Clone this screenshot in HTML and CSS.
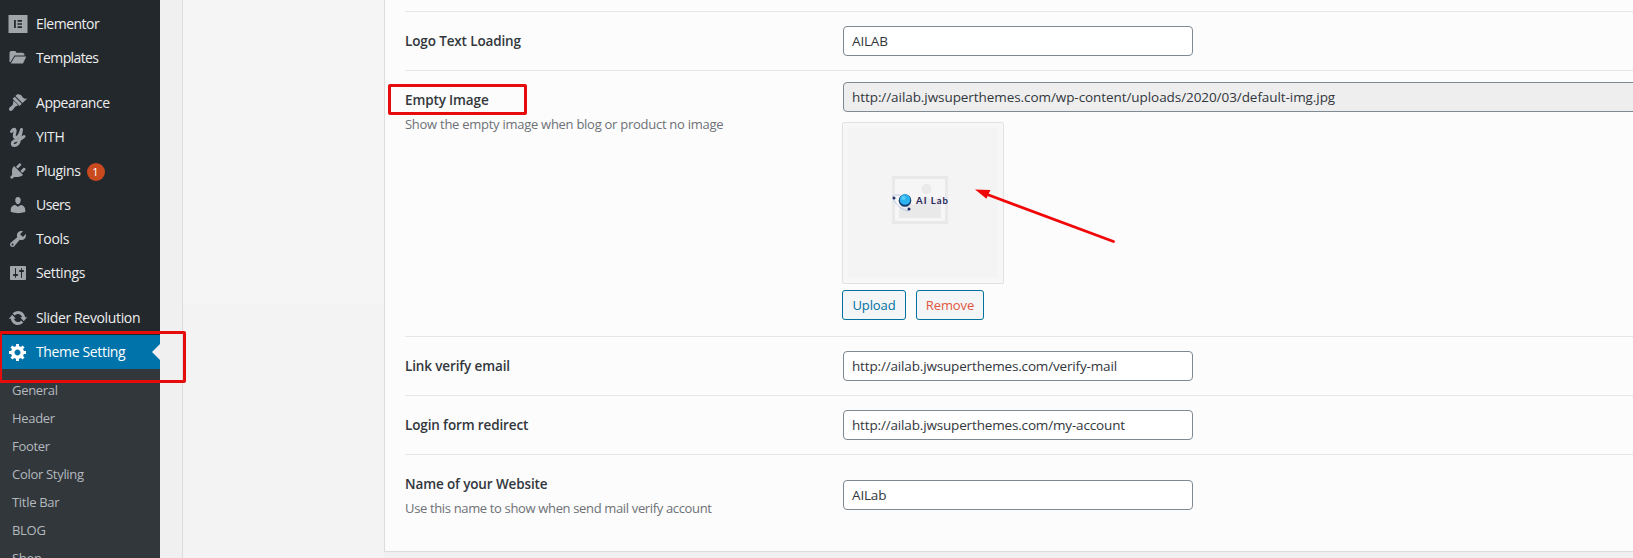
FILE: index.html
```html
<!DOCTYPE html>
<html lang="en">
<head>
<meta charset="utf-8">
<title>Theme Setting</title>
<link rel="stylesheet" href="styles.css">
</head>
<body>
<div class="app">
  <nav class="sidebar">
    <ul class="menu">
      <li class="item"><svg class="icon" viewBox="0 0 20 20"><path fill-rule="evenodd" d="M.5 1h19v18H.5zM6 6v8h1.800V6zM9.500 6v1.700H14V6zM9.500 9.200v1.600H14V9.200zM9.500 12.300V14H14v-1.700z"/></svg><span class="name t-elementor">Elementor</span></li>
      <li class="item"><svg class="icon" viewBox="0 0 20 20"><path d="M1.500 14V4.500L2.700 3h4.600L8.500 4.800H15L16.500 6.300v1.200H6.500L2.500 14z"/><path d="M2.700 15.500L7 8.500h11.300L15 15.500z"/></svg><span class="name t-templates">Templates</span></li>
      <li class="gap"></li>
      <li class="item"><svg class="icon" viewBox="0 0 20 20"><path d="M14.480 10.060L7.410 2.990l1.500-1.500c.5-.56 2.300-.47 3.510.32 1.210.8 1.430 1.280 2 2.100 1.180 1.680 3.060 1.850 5.020 1.700zM13.770 10.770l-2.120 2.120-7.070-7.070 2.120-2.120z"/><path d="M5.500 7.500l5 5c-2 .3-3 .7-4 2-1 1.400-1.700 2.800-3 3.300-1.500.5-3-.9-2.400-2.400.4-1.300 1.600-2 3-3 1.300-1 .9-2.800 1.400-4.900z"/></svg><span class="name t-appearance">Appearance</span></li>
      <li class="item"><svg class="icon" viewBox="0 0 20 20"><path class="stroke" d="M3.500 4.500C5.500 1.300 7.700 1.800 7 5 6 8.500 5.800 11 8.200 10.500 11.500 10 12.500 6 13.500 2.500L11.500 13c-.8 4-3 5.500-5.200 5.500-2.500 0-2.800-3-.5-4.300C9 12.600 13 13 16 9.500"/></svg><span class="name">YITH</span></li>
      <li class="item"><svg class="icon" viewBox="0 0 20 20"><path d="M13.110 4.360L9.870 7.600 8 5.730l3.240-3.240c.35-.34 1.050-.2 1.560.32.52.51.66 1.210.310 1.550zm-8 1.770l.91-1.120 9.010 9.010-1.190.84c-.71.71-2.630 1.160-3.820 1.160H6.140L4.900 17.260c-.59.59-1.540.59-2.120 0-.59-.58-.59-1.530 0-2.120l1.240-1.240v-3.880c0-1.130.4-3.190 1.090-3.890zm7.260 3.970l3.240-3.240c.34-.35 1.040-.21 1.550.31.52.51.66 1.210.31 1.550l-3.240 3.250z"/></svg><span class="name">Plugins</span><span class="count">1</span></li>
      <li class="item"><svg class="icon" viewBox="0 0 20 20"><path d="M10 9.250c-2.270 0-2.730-3.440-2.730-3.440C7 4.020 7.820 2 9.970 2c2.160 0 2.980 2.020 2.710 3.810 0 0-.41 3.440-2.680 3.440zm0 2.570L12.720 10c2.390 0 4.520 2.330 4.520 4.530v2.490s-3.650 1.130-7.240 1.130c-3.650 0-7.240-1.130-7.240-1.130v-2.490c0-2.250 1.940-4.480 4.470-4.480z"/></svg><span class="name t-users">Users</span></li>
      <li class="item"><svg class="icon" viewBox="0 0 20 20"><path d="M16.680 9.770c-1.340 1.340-3.300 1.670-4.950.99l-5.410 6.520c-.99.99-2.590.99-3.580 0s-.99-2.590 0-3.570l6.520-5.420c-.68-1.650-.35-3.610.99-4.950 1.280-1.280 3.120-1.620 4.720-1.060l-2.890 2.890 2.820 2.820 2.860-2.870c.53 1.580.18 3.390-1.080 4.650zM3.810 16.210c.4.390 1.040.39 1.430 0 .4-.4.4-1.040 0-1.430-.39-.4-1.030-.4-1.430 0-.39.390-.39 1.030 0 1.430z"/></svg><span class="name">Tools</span></li>
      <li class="item"><svg class="icon" viewBox="0 0 20 20"><path d="M18 16V4c0-.55-.45-1-1-1H3c-.55 0-1 .45-1 1v12c0 .55.45 1 1 1h14c.55 0 1-.45 1-1zM8 11h1c.55 0 1 .45 1 1s-.45 1-1 1H8v1.500c0 .28-.22.500-.500.500s-.500-.220-.500-.500V13H6c-.55 0-1-.45-1-1s.45-1 1-1h1V5.500c0-.280.220-.500.500-.500s.500.220.500.500V11zm5-2h-1c-.55 0-1-.45-1-1s.45-1 1-1h1V5.500c0-.28.220-.500.500-.500s.500.220.500.500V7h1c.55 0 1 .45 1 1s-.45 1-1 1h-1v5.500c0 .28-.22.500-.500.500s-.500-.220-.500-.500V9z"/></svg><span class="name">Settings</span></li>
      <li class="gap"></li>
      <li class="item"><svg class="icon" viewBox="0 0 20 20"><path d="M10.200 3c3.530 0 6.430 2.810 6.920 6.280h2.080l-3.500 4-3.500-4h1.920c-.45-1.970-2.010-3.250-4.120-3.250-1.350 0-2.430.61-3.240 1.580L4.550 5.460C5.830 4 8.110 3 10.200 3zm-.4 14c-3.520 0-6.430-2.810-6.920-6.280H.8l3.500-4 3.500 4H5.880c.45 1.970 2.010 3.250 3.920 3.250 1.350 0 2.430-.61 3.240-1.580l2.210 2.150C13.970 16 11.900 17 9.800 17z"/></svg><span class="name">Slider Revolution</span></li>
      <li class="item current"><svg class="icon" viewBox="0 0 20 20"><path d="M18 12h-2.180c-.17.7-.44 1.350-.81 1.930l1.540 1.540-2.100 2.100-1.540-1.540c-.58.36-1.230.63-1.910.79V19H8v-2.180c-.68-.16-1.330-.43-1.910-.79l-1.540 1.540-2.120-2.120 1.540-1.540c-.36-.58-.63-1.230-.79-1.910H1V9.030h2.170c.16-.7.440-1.350.8-1.940L2.430 5.550l2.100-2.100 1.540 1.540c.58-.37 1.240-.64 1.930-.81V2h3v2.180c.68.16 1.330.43 1.910.79l1.540-1.540 2.120 2.120-1.540 1.540c.36.59.64 1.240.8 1.940H18V12zm-8.500 1.500c1.660 0 3-1.340 3-3s-1.340-3-3-3-3 1.340-3 3 1.340 3 3 3z"/></svg><span class="name">Theme Setting</span></li>
    </ul>
    <ul class="submenu">
      <li>General</li><li>Header</li><li>Footer</li><li>Color Styling</li><li>Title Bar</li><li>BLOG</li><li>Shop</li>
    </ul>
  </nav>
  <div class="gutter"></div>
  <aside class="tabs"></aside>
  <main class="panel">
    <section class="field">
      <div class="label"><h3>Logo Text Loading</h3></div>
      <div class="control"><div class="input">AILAB</div></div>
    </section>
    <section class="field media">
      <div class="label"><h3>Empty Image</h3><p class="d-empty">Show the empty image when blog or product no image</p></div>
      <div class="control">
        <div class="input readonly">http://ailab.jwsuperthemes.com/wp-content/uploads/2020/03/default-img.jpg</div>
        <div class="preview">
          <svg viewBox="0 0 150 150" width="150" height="150">
            <rect width="150" height="150" fill="#f4f4f4"/>
            <rect x="45.500" y="49.500" width="53" height="45" fill="#f6f6f6" stroke="#e9e9e9" stroke-width="3"/>
            <circle cx="78.500" cy="61" r="5" fill="#eaeaea"/>
            <path d="M51 90V79l7-7 8 5 12-9 7 5 8-5v22z" fill="#e9e9e9"/>
            <path d="M45 67c-1 7 9 16 16 16M47 67l5 0" fill="none" stroke="#9db9e0" stroke-width=".7"/>
            <circle cx="46" cy="70" r="1.500" fill="#243468"/><circle cx="61" cy="81" r="1.500" fill="#16265e"/>
            <circle cx="57" cy="72.500" r="6.300" fill="#153b70"/><circle cx="57" cy="71.500" r="5.300" fill="#2bb3ef"/><circle cx="55.500" cy="70" r="2" fill="#5dcef8"/>
            <text class="brand" x="68" y="76" textLength="32">AI Lab</text>
          </svg>
        </div>
        <div class="buttons"><button class="upload">Upload</button><button class="remove">Remove</button></div>
      </div>
    </section>
    <section class="field">
      <div class="label"><h3>Link verify email</h3></div>
      <div class="control"><div class="input">http://ailab.jwsuperthemes.com/verify-mail</div></div>
    </section>
    <section class="field">
      <div class="label"><h3>Login form redirect</h3></div>
      <div class="control"><div class="input">http://ailab.jwsuperthemes.com/my-account</div></div>
    </section>
    <section class="field last">
      <div class="label"><h3>Name of your Website</h3><p class="d-name">Use this name to show when send mail verify account</p></div>
      <div class="control"><div class="input">AILab</div></div>
    </section>
  </main>
  <div class="mark mark-menu"></div>
  <div class="mark mark-label"></div>
  <svg class="arrow" viewBox="0 0 145 60"><path d="M14 8L141.500 55.500" stroke="#f00808" stroke-width="2.800" stroke-linecap="round"/><path d="M3 3.500L18.500 4l-2.300 4.500L14.500 12.800z" fill="#f00808"/></svg>
</div>
</body>
</html>
```
FILE: styles.css
```css
* { box-sizing: border-box; }
body { margin: 0; background: #f0f0f0; font-family: "Open Sans", "Noto Sans", sans-serif; font-size: 14px; color: #32373c; overflow: hidden; }
ul, h3, p { margin: 0; padding: 0; list-style: none; }
.app { position: relative; display: flex; width: 1633px; height: 558px; overflow: hidden; }

.sidebar { flex: none; width: 160px; background: #32373c; }
.menu { padding-top: 7px; background: #23282d; }
.item { display: flex; align-items: center; height: 34px; padding-left: 8px; color: #eee; }
.gap { height: 11px; }
.icon { width: 20px; height: 20px; margin-right: 8px; fill: #a0a5aa; }
.stroke { fill: none; stroke: #a0a5aa; stroke-width: 3; stroke-linecap: round; stroke-linejoin: round; }
.name { padding-bottom: 2px; font-size: 14px; letter-spacing: -.35px; white-space: nowrap; }
.t-elementor { letter-spacing: -.5px; }
.t-templates { letter-spacing: -.62px; }
.t-appearance { letter-spacing: -.47px; }
.t-users { letter-spacing: -.55px; }
.count { width: 18px; height: 18px; margin: 2px 0 0 6px; border-radius: 9px; background: #ca4a1f; color: #fff; font-size: 11px; line-height: 17px; text-align: center; }
.current { background: #0073aa; color: #fff; }
.current .icon { fill: #fff; }
.current::after { content: ""; margin-left: auto; border: 8px solid transparent; border-left-width: 0; border-right-color: #f1f1f1; }
.submenu { padding-top: 7px; }
.submenu li { height: 28px; padding-left: 12px; color: #b4b9be; font-size: 13px; line-height: 28px; letter-spacing: -.3px; }

.gutter { flex: none; width: 22px; }
.tabs { flex: none; width: 202px; border-left: 1px solid #ddd; background: linear-gradient(#f5f5f5 303px, #f3f3f3 304px); }
.panel { flex: none; width: 1249px; height: 552px; padding: 11px 0 0 20px; border-left: 1px solid #ddd; border-bottom: 1px solid #ddd; background: #fcfcfc; }
.field { display: flex; height: 59px; border-top: 1px solid #e7e7e7; }
.media { height: 266px; }
.label { flex: none; width: 438px; padding-top: 19px; }
.label h3 { font-size: 13.500px; font-weight: 600; line-height: 20px; letter-spacing: -.13px; color: #32373c; }
.label p { margin-top: 5px; font-size: 13px; line-height: 19px; color: #6d7176; }
.label .d-empty { letter-spacing: -.27px; }
.label .d-name { letter-spacing: -.35px; }
.control { flex: none; padding-top: 14px; }
.input { width: 350px; height: 30px; padding-left: 8px; border: 1px solid #7e8993; border-radius: 4px; background: #fff; color: #32373c; font-size: 13.500px; line-height: 28px; letter-spacing: -.16px; white-space: nowrap; }
.media .control { padding-top: 11px; }
.readonly { width: 850px; background: #eee; letter-spacing: -.07px; }
.preview { width: 162px; height: 162px; margin: 10px 0 0 -1px; padding: 5px; border: 1px solid #e2e2e2; border-radius: 2px; background: #f7f7f7; }
.preview svg { display: block; }
.brand { font: 700 9.500px Lato, sans-serif; fill: #29265b; }
.buttons { display: flex; gap: 10px; margin: 6px 0 0 -1px; }
.buttons button { height: 30px; padding: 0; border: 1px solid #0071a1; border-radius: 3px; background: #f3f5f6; color: #0071a1; font: 13px/28px "Open Sans", sans-serif; letter-spacing: -.1px; }
.buttons .upload { width: 64px; }
.buttons .remove { width: 68px; color: #e2553f; }
.last .control { padding-top: 25px; }

.mark { position: absolute; border: 3px solid #e60c0c; border-radius: 2px; }
.mark-menu { left: -1px; top: 331px; width: 187px; height: 52px; }
.mark-label { left: 388px; top: 84px; width: 139px; height: 31px; }
.arrow { position: absolute; left: 972px; top: 186px; width: 145px; height: 60px; }
```
